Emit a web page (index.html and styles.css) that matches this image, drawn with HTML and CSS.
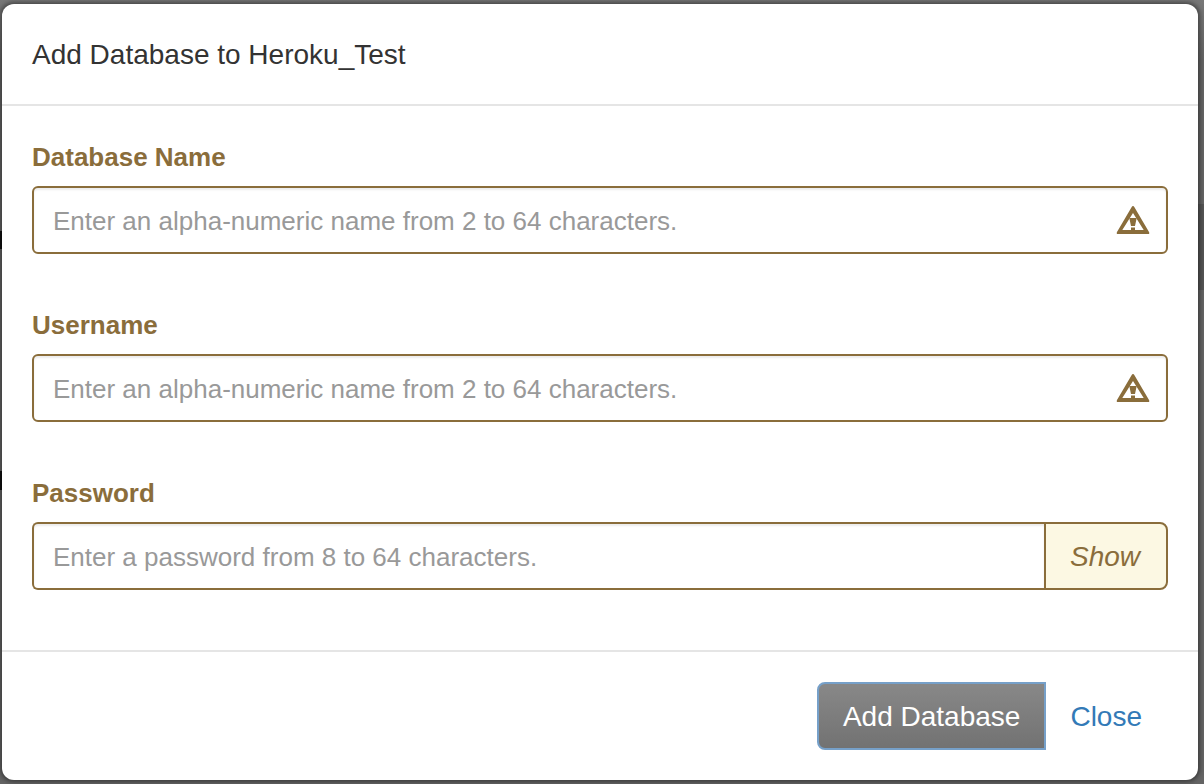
FILE: index.html
```html
<!DOCTYPE html>
<html lang="en">
<head>
    <meta charset="UTF-8">
    <meta name="viewport" content="width=device-width, initial-scale=1.0">
    <title>Add Database to Heroku_Test</title>
    <link rel="stylesheet" href="styles.css">
</head>
<body>

    <form class="modal" role="dialog" aria-labelledby="modalTitle">
        <header class="modal-header">
            <h1 id="modalTitle">Add Database to Heroku_Test</h1>
        </header>

        <div class="modal-body">
            <div class="form-group">
                <label for="databaseName">Database Name</label>
                <div class="input-wrap">
                    <input type="text" id="databaseName" placeholder="Enter an alpha-numeric name from 2 to 64 characters.">
                    <svg class="warning-icon" viewBox="0 0 34 28" aria-hidden="true">
                        <path fill-rule="evenodd" d="M17 0 Q17.8 0 18.3 1 L33 26 Q34 28 32 28 H2 Q0 28 1 26 L15.7 1 Q16.2 0 17 0 Z M17 7 L6.3 24 H27.7 Z"/>
                        <path d="M13.3 12 H20.7 L19 20 H15 Z M15 21.5 H19 V24.5 H15 Z"/>
                    </svg>
                </div>
            </div>
            <div class="form-group">
                <label for="userName">Username</label>
                <div class="input-wrap">
                    <input type="text" id="userName" placeholder="Enter an alpha-numeric name from 2 to 64 characters.">
                    <svg class="warning-icon" viewBox="0 0 34 28" aria-hidden="true">
                        <path fill-rule="evenodd" d="M17 0 Q17.8 0 18.3 1 L33 26 Q34 28 32 28 H2 Q0 28 1 26 L15.7 1 Q16.2 0 17 0 Z M17 7 L6.3 24 H27.7 Z"/>
                        <path d="M13.3 12 H20.7 L19 20 H15 Z M15 21.5 H19 V24.5 H15 Z"/>
                    </svg>
                </div>
            </div>
            <div class="form-group">
                <label for="password">Password</label>
                <div class="input-wrap">
                    <input type="password" id="password" class="with-addon" placeholder="Enter a password from 8 to 64 characters.">
                    <button type="button" class="addon" id="showPassword">Show</button>
                </div>
            </div>
        </div>

        <footer class="modal-footer">
            <button type="submit" class="btn btn-primary">Add Database</button>
            <button type="button" class="btn btn-link">Close</button>
        </footer>
    </form>

    <script>
        document.getElementById('showPassword').addEventListener('click', function() {
            const password = document.getElementById('password');
            const hidden = password.type === 'password';
            password.type = hidden ? 'text' : 'password';
            this.textContent = hidden ? 'Hide' : 'Show';
        });
    </script>

</body>
</html>
```
FILE: styles.css
```css
* {
    box-sizing: border-box;
}
body {
    margin: 0;
    padding: 4px 6px 4px 2px;
    min-height: 100vh;
    font-family: "Liberation Sans", Helvetica, Arial, sans-serif;
    font-size: 28px;
    line-height: 40px;
    color: #333;
    /* dimmed page behind the modal */
    background:
        linear-gradient(#111, #111) 0 231px / 2px 18px no-repeat,
        linear-gradient(#111, #111) 0 471px / 2px 19px no-repeat,
        linear-gradient(#555, #555) 100% 204px / 6px 86px no-repeat,
        linear-gradient(#777 0, #646464 60px, #646464 100%);
}
.modal {
    background-color: #fff;
    border-radius: 12px;
    box-shadow: 0 0 4px 2px rgba(0, 0, 0, 0.4);
}
.modal-header {
    padding: 30px 30px 28px;
    border-bottom: 2px solid #e5e5e5;
}
h1 {
    margin: 0;
    font-size: 28px;
    font-weight: normal;
    line-height: 42px;
}
.modal-body {
    padding: 30px 30px 60px;
}
.form-group + .form-group {
    margin-top: 50px;
}
.form-group label {
    display: block;
    margin-bottom: 8px;
    font-size: 26px;
    font-weight: bold;
    line-height: 42px;
    color: #8a6d3b;
}
.input-wrap {
    position: relative;
    display: flex;
}
input {
    flex: 1;
    min-width: 0;
    height: 68px;
    padding: 2px 70px 0 19px;
    border: 2px solid #8a6d3b;
    border-radius: 6px;
    box-shadow: inset 0 2px 2px rgba(0, 0, 0, 0.075);
    font: inherit;
    font-size: 26px;
    color: #555;
    background-color: #fff;
}
input::placeholder {
    color: #999;
    opacity: 1;
}
.with-addon {
    padding-right: 20px;
    border-right: none;
    border-radius: 6px 0 0 6px;
}
.addon {
    padding: 2px 26px 0 24px;
    border: 2px solid #8a6d3b;
    border-radius: 0 8px 8px 0;
    font: inherit;
    font-style: italic;
    color: #8a6d3b;
    background-color: #fcf8e3;
    cursor: pointer;
}
.warning-icon {
    position: absolute;
    top: 20px;
    right: 18px;
    width: 34px;
    height: 28px;
    fill: #8a6d3b;
    pointer-events: none;
}
.modal-footer {
    display: flex;
    justify-content: flex-end;
    padding: 30px;
    border-top: 2px solid #e5e5e5;
}
.btn {
    height: 68px;
    padding: 2px 24px 0;
    border: 2px solid transparent;
    font: inherit;
    cursor: pointer;
}
.btn-primary {
    border-color: #76a0c9;
    border-radius: 8px 0 0 8px;
    color: #fff;
    background: linear-gradient(#888, #727272);
}
.btn-link {
    padding-left: 22px;
    color: #337ab7;
    background: none;
}
.btn-link:hover {
    text-decoration: underline;
}
```
